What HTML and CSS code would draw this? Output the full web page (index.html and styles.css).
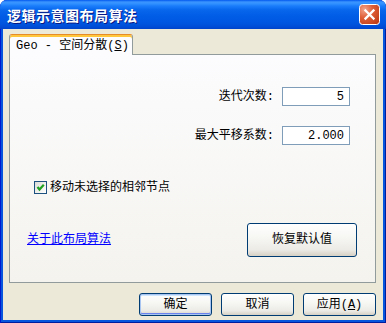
FILE: index.html
```html
<!DOCTYPE html>
<html>
<head>
<meta charset="utf-8">
<link rel="stylesheet" href="styles.css">
</head>
<body>
<div class="window">
  <div class="titlebar">
    <span class="title">逻辑示意图布局算法</span>
    <div class="close">
      <svg width="21" height="21" viewBox="0 0 21 21">
        <defs>
          <radialGradient id="cg" cx="25%" cy="25%" r="90%">
            <stop offset="0" stop-color="#F2A48C"/>
            <stop offset="0.45" stop-color="#E0603A"/>
            <stop offset="1" stop-color="#C13D17"/>
          </radialGradient>
        </defs>
        <rect x="0.5" y="0.5" width="20" height="20" rx="3" fill="url(#cg)" stroke="#fff"/>
        <path d="M6.5 6.5L14.5 14.5M14.5 6.5L6.5 14.5" stroke="#fff" stroke-width="2.3" stroke-linecap="square"/>
      </svg>
    </div>
  </div>
  <div class="client">
    <div class="tabs">
      <div class="tab">Geo - 空间分散(<u>S</u>)</div>
    </div>
    <div class="panel">
      <div class="field">
        <span class="label">迭代次数:</span>
        <div class="input">5</div>
      </div>
      <div class="field second">
        <span class="label">最大平移系数:</span>
        <div class="input">2.000</div>
      </div>
      <div class="check">
        <span class="box">
          <svg width="11" height="11" viewBox="0 0 11 11">
            <path d="M2.5 5L4.5 7.5L8.8 2.8" fill="none" stroke="#21A121" stroke-width="2.2"/>
          </svg>
        </span>
        <span>移动未选择的相邻节点</span>
      </div>
      <div class="bottomrow">
        <a class="link" href="#">关于此布局算法</a>
        <button class="btn restore">恢复默认值</button>
      </div>
    </div>
    <div class="buttons">
      <button class="btn default">确定</button>
      <button class="btn">取消</button>
      <button class="btn">应用(<u>A</u>)</button>
    </div>
  </div>
</div>
</body>
</html>
```

FILE: styles.css
```css
html, body {
  margin: 0;
  padding: 0;
}
body {
  width: 386px;
  height: 323px;
  overflow: hidden;
  background: #ffffff;
  font: 12px/14px "Liberation Mono", "Noto Sans CJK SC", monospace;
  color: #000;
}
.window {
  width: 386px;
  height: 323px;
  display: flex;
  flex-direction: column;
  background: #0855DD;
  border-radius: 7px 7px 0 0;
  overflow: hidden;
  box-shadow: inset 1px 0 0 #0019CF, inset -1px 0 0 #001DA0, inset 0 -1px 0 #001DA0;
}
.titlebar {
  height: 29px;
  flex: none;
  display: flex;
  align-items: center;
  justify-content: space-between;
  padding: 0 6px 0 7px;
  background: linear-gradient(to bottom, #0058EE 0px, #3D95FF 2px, #2E8EFF 4px, #1A7CFA 6px, #0766EC 10px, #025EE6 15px, #0059E3 20px, #0054DE 24px, #004CD6 27px, #0043C9 29px);
}
.title {
  color: #fff;
  font: bold 14px/16px "Noto Sans CJK SC", sans-serif;
  text-shadow: 1px 1px 0 #0A1883;
  letter-spacing: 0.5px;
}
.close {
  width: 21px;
  height: 21px;
  display: flex;
}
.client {
  flex: 1;
  margin: 0 3px 3px 3px;
  background: #ECE9D8;
  padding: 5px 7px 0 6px;
  display: flex;
  flex-direction: column;
}
.tabs {
  display: flex;
  height: 20px;
}
.tab {
  position: relative;
  z-index: 1;
  box-sizing: border-box;
  width: 124px;
  height: 21px;
  border: 1px solid #919B9C;
  border-top: 1px solid #E68B2C;
  border-bottom: none;
  border-radius: 3px 3px 0 0;
  background: #FCFCFE;
  box-shadow: inset 0 2px 0 #FFC73C;
  padding: 4px 0 0 6px;
  white-space: pre;
  font-size: 12px;
  line-height: 14px;
}
.panel {
  box-sizing: border-box;
  height: 229px;
  border: 1px solid #919B9C;
  background: linear-gradient(to bottom, #FCFCFE, #F4F3EE);
  display: flex;
  flex-direction: column;
  padding: 32px 25px 0 17px;
}
.field {
  display: flex;
  justify-content: flex-end;
  align-items: center;
  gap: 8px;
  height: 19px;
}
.field.second {
  margin-top: 20px;
}
.input {
  box-sizing: border-box;
  width: 68px;
  height: 19px;
  border: 1px solid #7F9DB9;
  background: #fff;
  text-align: right;
  padding: 2px 5px 0 0;
  line-height: 14px;
}
.check {
  display: flex;
  align-items: center;
  gap: 3px;
  margin-top: 36px;
  margin-left: 7px;
  height: 13px;
}
.box {
  box-sizing: border-box;
  width: 13px;
  height: 13px;
  border: 1px solid #1C5180;
  background: linear-gradient(135deg, #DCDCD7, #FFFFFF);
  display: flex;
  align-items: center;
  justify-content: center;
}
.bottomrow {
  display: flex;
  align-items: center;
  justify-content: space-between;
  margin-top: 29px;
  margin-right: -7px;
}
.link {
  color: #0000FF;
  text-decoration: underline;
}
.btn {
  box-sizing: border-box;
  width: 73px;
  height: 23px;
  border: 1px solid #003C74;
  border-radius: 3px;
  background: linear-gradient(to bottom, #FFFFFF 0%, #F7F7F4 40%, #ECEBE6 80%, #D6D0C5 100%);
  font: 12px/14px "Liberation Mono", "Noto Sans CJK SC", monospace;
  color: #000;
  padding: 0;
}
.btn.restore {
  width: 110px;
  height: 34px;
}
.btn.default {
  box-shadow: inset 0 0 0 1px #A8C4F0, inset 0 1px 0 1px #CEE7FF, inset 0 -1px 0 1px #6982EE;
}
.buttons {
  display: flex;
  justify-content: flex-end;
  gap: 9px;
  margin-top: 10px;
}
```
